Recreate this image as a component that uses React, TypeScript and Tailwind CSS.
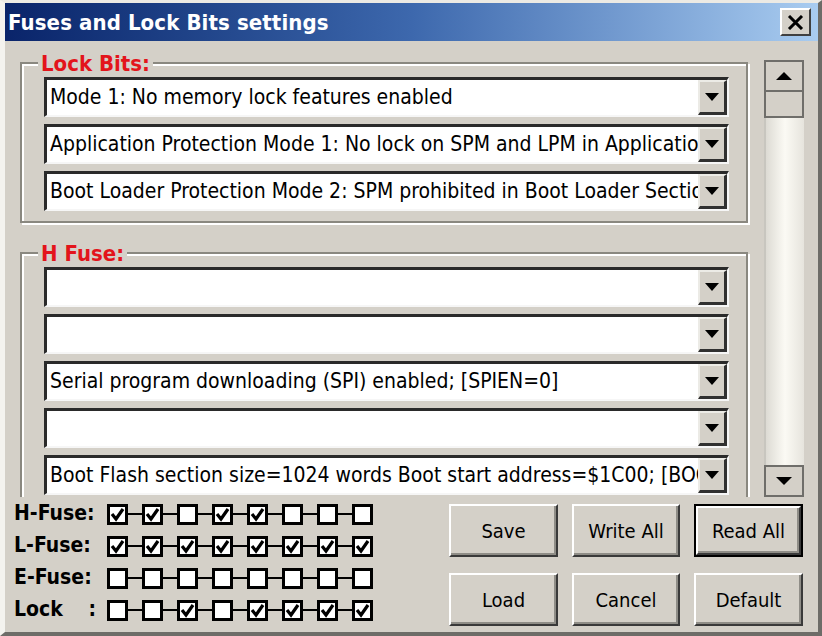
import React from 'react';

const lockBits = [
  'Mode 1: No memory lock features enabled',
  'Application Protection Mode 1: No lock on SPM and LPM in Application Section',
  'Boot Loader Protection Mode 2: SPM prohibited in Boot Loader Section',
];

const hFuse = [
  '',
  '',
  'Serial program downloading (SPI) enabled; [SPIEN=0]',
  '',
  'Boot Flash section size=1024 words Boot start address=$1C00; [BOOTSZ=00]',
];

const fuseRows = [
  { label: 'H-Fuse:', bits: [1, 1, 0, 1, 1, 0, 0, 0] },
  { label: 'L-Fuse:', bits: [1, 1, 1, 1, 1, 1, 1, 1] },
  { label: 'E-Fuse:', bits: [0, 0, 0, 0, 0, 0, 0, 0] },
  { label: 'Lock', bits: [0, 0, 1, 0, 1, 1, 1, 1] },
];

const font = { fontFamily: '"DejaVu Sans Condensed", "DejaVu Sans", sans-serif' };

function DownArrow() {
  return (
    <svg width="14" height="8" viewBox="0 0 14 8">
      <polygon points="0,0 14,0 7,8" fill="#000" />
    </svg>
  );
}

function Combo({ text }: { text: string }) {
  return (
    <div className="flex h-[40px] bg-white border-t-[3px] border-l-[3px] border-t-[#2a2a2a] border-l-[#2a2a2a] border-b-2 border-r-2 border-b-[#f6f6f6] border-r-[#f6f6f6]">
      <div className="flex-1 min-w-0 overflow-hidden whitespace-nowrap pl-[3px] text-[21px] leading-[35px] text-black">
        {text}
      </div>
      <div className="w-[29px] flex items-center justify-center bg-[#d4d0c8] border-t-2 border-l-2 border-t-[#ecebe6] border-l-[#ecebe6] border-b-[3px] border-r-[3px] border-b-[#303030] border-r-[#303030]">
        <DownArrow />
      </div>
    </div>
  );
}

function Group({ label, items, className }: { label: string; items: string[]; className?: string }) {
  return (
    <div
      className={`relative w-[728px] border-2 border-[#8a8880] shadow-[inset_2px_2px_0_#fff,2px_2px_0_#fff] pt-[13px] pl-[22px] pr-[17px] pb-[10px] ${className ?? ''}`}
    >
      <span className="absolute -top-[12px] left-[16px] px-[3px] bg-[#d4d0c8] text-[22px] leading-[24px] font-bold text-[#e3141b]">
        {label}
      </span>
      <div className="flex flex-col gap-[7px]">
        {items.map((t, i) => (
          <Combo key={i} text={t} />
        ))}
      </div>
    </div>
  );
}

function ScrollButton({ up }: { up?: boolean }) {
  return (
    <div className="h-[32px] flex items-center justify-center bg-[#d4d0c8] border-2 border-[#6f6e6a]">
      <svg width="16" height="8" viewBox="0 0 16 8">
        <polygon points={up ? '0,8 16,8 8,0' : '0,0 16,0 8,8'} fill="#000" />
      </svg>
    </div>
  );
}

function FuseBox({ on }: { on: boolean }) {
  return (
    <div className="w-[21px] h-[21px] border-[3px] border-black bg-white flex items-center justify-center">
      {on && (
        <svg width="15" height="15" viewBox="0 0 15 15">
          <polyline points="2,7 6,12 13,2" fill="none" stroke="#000" strokeWidth="3.2" />
        </svg>
      )}
    </div>
  );
}

function WinButton({ label, isDefault }: { label: string; isDefault?: boolean }) {
  return (
    <div className={isDefault ? 'border-2 border-black' : ''}>
      <div
        className={`flex items-center justify-center bg-[#d4d0c8] border-t-2 border-l-2 border-t-white border-l-white border-b-2 border-r-2 border-b-[#3a3a3a] border-r-[#3a3a3a] shadow-[inset_-2px_-2px_0_#8f8d87] text-[20px] text-black ${isDefault ? 'h-[49px]' : 'h-[53px]'}`}
      >
        {label}
      </div>
    </div>
  );
}

export default function App() {
  return (
    <div className="w-[822px] h-[636px] bg-[#d4d0c8] overflow-hidden select-none" style={font}>
      <div className="h-full flex flex-col border-t-[3px] border-t-[#eceae4] border-l-[5px] border-l-[#f4f3ef] border-r-[4px] border-r-[#6d6c68] border-b-[4px] border-b-[#6d6c68]">
        <div className="h-[38px] flex items-center bg-linear-to-r from-[#0a246a] via-[#3d68ad] to-[#a9ccf0] pl-[3px] pr-[7px]">
          <span className="text-white font-bold text-[22px] tracking-[0.1px]">Fuses and Lock Bits settings</span>
          <div className="ml-auto w-[31px] h-[28px] flex items-center justify-center bg-[#d4d0c8] border-t-2 border-l-2 border-t-white border-l-white border-b-2 border-r-2 border-b-[#404040] border-r-[#404040]">
            <svg width="17" height="15" viewBox="0 0 17 15">
              <path d="M2 1 L15 14 M15 1 L2 14" stroke="#000" strokeWidth="3" />
            </svg>
          </div>
        </div>

        <div className="h-[456px] flex">
          <div className="w-[759px] overflow-hidden pl-[15px] pt-[21px]">
            <Group label="Lock Bits:" items={lockBits} />
            <Group label="H Fuse:" items={hFuse} className="mt-[29px]" />
          </div>
          <div className="mt-[19px] w-[40px] h-[437px] flex flex-col">
            <ScrollButton up />
            <div className="h-[26px] bg-[#d4d0c8] border-2 border-t-0 border-[#6f6e6a]" />
            <div className="flex-1 bg-linear-to-r from-[#dddbd4] via-[#fbfaf4] to-[#e6e4dd] border-l-2 border-[#c8c6bf]" />
            <ScrollButton />
          </div>
        </div>

        <div className="flex-1 flex">
          <div className="pl-[9px] pt-[1px] flex flex-col">
            {fuseRows.map((row) => (
              <div key={row.label} className="h-[32px] flex items-center">
                <div className="w-[93px] flex text-[21px] font-bold text-black">
                  {row.label === 'Lock' ? (
                    <>
                      <span>Lock</span>
                      <span className="ml-auto pr-[11px]">:</span>
                    </>
                  ) : (
                    <span>{row.label}</span>
                  )}
                </div>
                {row.bits.map((b, i) => (
                  <React.Fragment key={i}>
                    {i > 0 && <div className="w-[14px] h-[2px] bg-black" />}
                    <FuseBox on={b === 1} />
                  </React.Fragment>
                ))}
              </div>
            ))}
          </div>
          <div className="ml-auto mr-[15px] mt-[7px] grid grid-cols-[109px_108px_109px] gap-x-[14px] gap-y-[16px] h-fit">
            <WinButton label="Save" />
            <WinButton label="Write All" />
            <WinButton label="Read All" isDefault />
            <WinButton label="Load" />
            <WinButton label="Cancel" />
            <WinButton label="Default" />
          </div>
        </div>
      </div>
    </div>
  );
}
